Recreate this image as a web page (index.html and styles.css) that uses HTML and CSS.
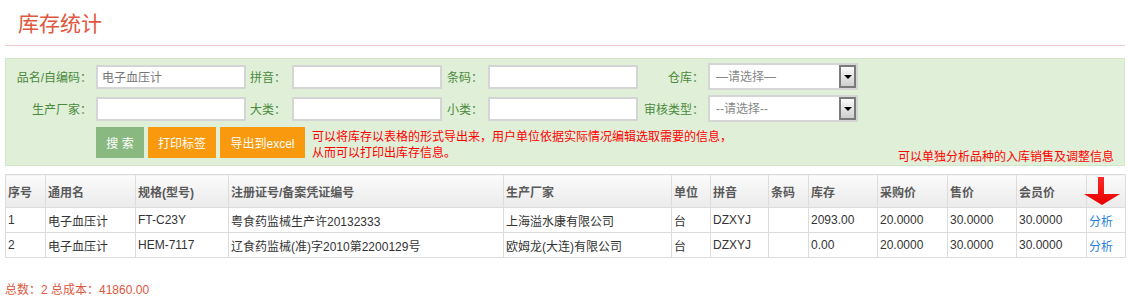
FILE: index.html
```html
<!DOCTYPE html>
<html lang="zh-CN">
<head>
    <meta charset="UTF-8">
    <title>库存统计</title>
    <link rel="stylesheet" href="styles.css">
</head>
<body>
    <div class="page">
        <div class="page-header">
            <h2 class="page-title">库存统计</h2>
        </div>

        <!-- search form -->
        <div class="filter">
            <div class="filter-grid">
                <label class="lbl lbl-right">品名/自编码：</label>
                <input type="text" class="txt" value="电子血压计">
                <label class="lbl lbl-left">拼音：</label>
                <input type="text" class="txt">
                <label class="lbl lbl-left lbl-narrow">条码：</label>
                <input type="text" class="txt">
                <label class="lbl lbl-right">仓库：</label>
                <div class="select-box">
                    <select class="select">
                        <option>—请选择—</option>
                    </select>
                    <span class="select-btn"><i class="caret"></i></span>
                </div>

                <label class="lbl lbl-right">生产厂家：</label>
                <input type="text" class="txt">
                <label class="lbl lbl-left">大类：</label>
                <input type="text" class="txt">
                <label class="lbl lbl-left lbl-narrow">小类：</label>
                <input type="text" class="txt">
                <label class="lbl lbl-right">审核类型：</label>
                <div class="select-box">
                    <select class="select">
                        <option>--请选择--</option>
                    </select>
                    <span class="select-btn"><i class="caret"></i></span>
                </div>
            </div>

            <div class="filter-actions">
                <button class="btn btn-search">搜 索</button>
                <button class="btn btn-orange">打印标签</button>
                <button class="btn btn-orange">导出到excel</button>
                <p class="note">可以将库存以表格的形式导出来，用户单位依据实际情况编辑选取需要的信息，<br>从而可以打印出库存信息。</p>
                <p class="note note-right">可以单独分析品种的入库销售及调整信息</p>
            </div>
        </div>

        <table class="grid">
            <colgroup>
                <col class="c-no">
                <col class="c-name">
                <col class="c-spec">
                <col class="c-reg">
                <col class="c-maker">
                <col class="c-unit">
                <col class="c-py">
                <col class="c-code">
                <col class="c-num">
                <col class="c-num2">
                <col class="c-num">
                <col class="c-num2">
                <col class="c-op">
            </colgroup>
            <thead>
                <tr>
                    <th>序号</th>
                    <th>通用名</th>
                    <th>规格(型号)</th>
                    <th>注册证号/备案凭证编号</th>
                    <th>生产厂家</th>
                    <th>单位</th>
                    <th>拼音</th>
                    <th>条码</th>
                    <th>库存</th>
                    <th>采购价</th>
                    <th>售价</th>
                    <th>会员价</th>
                    <th>
                        <svg class="arrow" width="38" height="28" viewBox="0 0 38 28">
                            <defs>
                                <linearGradient id="ar" x1="0" y1="0" x2="0" y2="1">
                                    <stop offset="0" stop-color="#ff2a2a"/>
                                    <stop offset="1" stop-color="#e60000"/>
                                </linearGradient>
                            </defs>
                            <path d="M15 0H21V17L37 17L19 28L1 17L15 17Z" fill="url(#ar)"/>
                        </svg>
                    </th>
                </tr>
            </thead>
            <tbody>
                <tr>
                    <td>1</td>
                    <td>电子血压计</td>
                    <td>FT-C23Y</td>
                    <td>粤食药监械生产许20132333</td>
                    <td>上海溢水康有限公司</td>
                    <td>台</td>
                    <td>DZXYJ</td>
                    <td></td>
                    <td>2093.00</td>
                    <td>20.0000</td>
                    <td>30.0000</td>
                    <td>30.0000</td>
                    <td><a href="#" class="link">分析</a></td>
                </tr>
                <tr>
                    <td>2</td>
                    <td>电子血压计</td>
                    <td>HEM-7117</td>
                    <td>辽食药监械(准)字2010第2200129号</td>
                    <td>欧姆龙(大连)有限公司</td>
                    <td>台</td>
                    <td>DZXYJ</td>
                    <td></td>
                    <td>0.00</td>
                    <td>20.0000</td>
                    <td>30.0000</td>
                    <td>30.0000</td>
                    <td><a href="#" class="link">分析</a></td>
                </tr>
            </tbody>
        </table>

        <div class="summary">总数：2 总成本：41860.00</div>
    </div>
</body>
</html>
```

FILE: styles.css
```css
:root {
    --title-color: #de5840;
    --label-color: #4b8a3c;
    --panel-bg: #e0efd8;
    --panel-border: #d3e6c9;
    --input-border: #d5d5d5;
    --grid-border: #dcdcdc;
    --text-primary: #333333;
    --note-color: #ff0000;
}

* {
    margin: 0;
    padding: 0;
    box-sizing: border-box;
    font-family: "Liberation Sans", "Noto Sans CJK SC", sans-serif;
}

body {
    background: #ffffff;
    color: var(--text-primary);
    font-size: 12px;
}

.page {
    padding: 0 5px;
}

.page-header {
    height: 46px;
    padding: 10px 0 0 13px;
    border-bottom: 1px solid #f0cccc;
}

.page-title {
    font-size: 21px;
    font-weight: normal;
    line-height: 28px;
    color: var(--title-color);
}

/* search panel */
.filter {
    margin-top: 12px;
    padding: 4px 10px 4px 0;
    background: var(--panel-bg);
    border: 1px solid var(--panel-border);
}

.filter-grid {
    display: grid;
    grid-template-columns: 90px 150px 46px 150px 46px 150px 70px 150px;
    grid-auto-rows: 27px;
    row-gap: 5px;
    align-items: center;
}

.lbl {
    color: var(--label-color);
    font-size: 12px;
    white-space: nowrap;
}

.lbl-right {
    text-align: right;
    padding-right: 4px;
}

.lbl-left {
    padding-left: 4px;
}

.lbl-narrow {
    padding-left: 5px;
}

.txt {
    width: 150px;
    height: 24px;
    border: 2px solid var(--input-border);
    background: #ffffff;
    padding: 0 4px;
    font-size: 12px;
    color: #777777;
    outline: none;
}

.select-box {
    display: flex;
    width: 150px;
    height: 27px;
    border: 2px solid var(--input-border);
    background: #ffffff;
}

.select {
    flex: 1;
    min-width: 0;
    border: none;
    background: transparent;
    appearance: none;
    -webkit-appearance: none;
    padding-left: 6px;
    font-size: 12px;
    color: #888888;
    outline: none;
}

.select-btn {
    width: 17px;
    border: 2px solid #7a7a7a;
    background: linear-gradient(#fafafa, #cfcfcf);
    display: flex;
    align-items: center;
    justify-content: center;
}

.caret {
    width: 0;
    height: 0;
    border-left: 4px solid transparent;
    border-right: 4px solid transparent;
    border-top: 4px solid #000000;
}

.filter-actions {
    display: flex;
    align-items: flex-start;
    gap: 4px;
    margin-top: 5px;
    padding-left: 90px;
}

.btn {
    height: 31px;
    border: none;
    color: #ffffff;
    font-size: 12px;
    cursor: pointer;
}

.btn-search {
    width: 48px;
    background: #89b880;
}

.btn-orange {
    background: #f8990e;
    padding: 0 10px;
}

.btn-orange + .btn-orange {
    width: 85px;
}

.note {
    color: var(--note-color);
    font-size: 12px;
    line-height: 16px;
    margin-left: 3px;
    padding-top: 2px;
}

.note-right {
    margin-left: auto;
    align-self: flex-end;
    margin-bottom: -4px;
}

/* result grid */
.grid {
    width: 100%;
    margin-top: 8px;
    border-collapse: collapse;
    table-layout: fixed;
}

.c-no { width: 40px; }
.c-name { width: 90px; }
.c-spec { width: 93px; }
.c-reg { width: 275px; }
.c-maker { width: 168px; }
.c-unit { width: 39px; }
.c-py { width: 58px; }
.c-code { width: 40px; }
.c-num { width: 69px; }
.c-num2 { width: 70px; }
.c-op { width: 39px; }

.grid th,
.grid td {
    border: 1px solid var(--grid-border);
    padding: 0 2px;
    text-align: left;
    white-space: nowrap;
    overflow: visible;
}

.grid th {
    height: 33px;
    background: linear-gradient(#fbfbfb, #ebebeb);
    color: #5a5a5a;
    font-weight: bold;
}

.grid td {
    height: 25px;
    color: var(--text-primary);
}

.grid tbody tr + tr td {
    height: 25px;
}

.arrow {
    display: block;
    margin: 0 0 0 -6px;
}

.link {
    color: #2b7fd8;
    text-decoration: none;
}

.summary {
    margin-top: 22px;
    color: var(--title-color);
    font-size: 12px;
}
```
